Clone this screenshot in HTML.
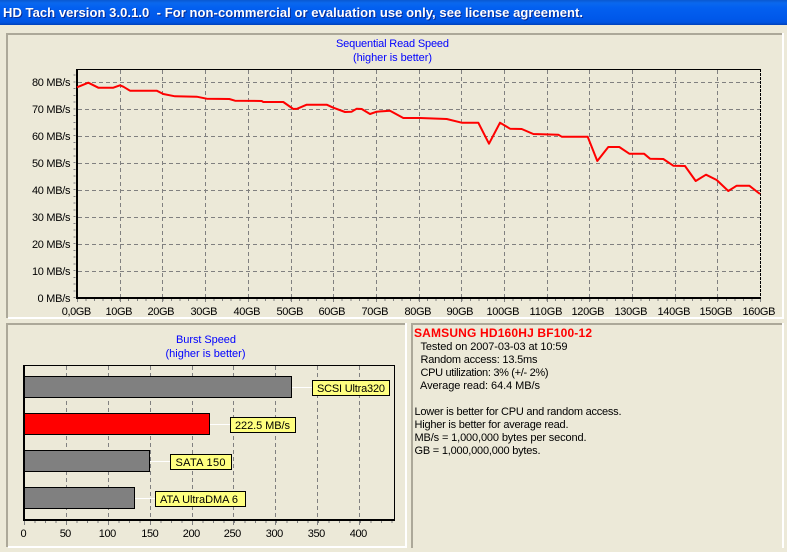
<!DOCTYPE html>
<html><head><meta charset="utf-8"><style>
html,body{margin:0;padding:0;background:#ece9d8;width:787px;height:552px;overflow:hidden}
svg{display:block}
text{font-family:"Liberation Sans",sans-serif;font-size:11px;fill:#000}
.b{fill:#0000ff}
.g{stroke:#808080;stroke-width:1;stroke-dasharray:4 3;fill:none}
.s{stroke:#808080;fill:none}
.lab{fill:#ffff80;stroke:#000;stroke-width:1}
.w{stroke:#fff;stroke-width:1}
</style></head><body>
<svg xmlns="http://www.w3.org/2000/svg" width="787" height="552" viewBox="0 0 787 552">
<defs>
<linearGradient id="t" x1="0" y1="0" x2="0" y2="1">
<stop offset="0" stop-color="#0a58d0"/><stop offset=".12" stop-color="#0a68ee"/><stop offset=".3" stop-color="#0360f0"/><stop offset=".75" stop-color="#0058ea"/><stop offset=".9" stop-color="#0054e0"/><stop offset="1" stop-color="#0040b8"/>
</linearGradient>
</defs>
<rect width="787" height="552" fill="#ece9d8"/>
<rect width="787" height="25" fill="url(#t)"/>
<text x="4" y="18" textLength="580" lengthAdjust="spacing" style="font-size:13px;font-weight:bold;fill:#0a2a90" xml:space="preserve">HD Tach version 3.0.1.0  - For non-commercial or evaluation use only, see license agreement.</text>
<text x="3" y="17" textLength="580" lengthAdjust="spacing" style="font-size:13px;font-weight:bold;fill:#fff" xml:space="preserve">HD Tach version 3.0.1.0  - For non-commercial or evaluation use only, see license agreement.</text>

<g shape-rendering="crispEdges">
<!-- top panel -->
<rect x="6" y="33" width="776" height="2" fill="#aca899"/>
<rect x="6" y="33" width="2" height="285" fill="#aca899"/>
<rect x="8" y="317" width="775" height="2" fill="#fff"/>
<rect x="782" y="33" width="2" height="286" fill="#fff"/>
<!-- lower left panel -->
<rect x="6" y="323" width="400" height="2" fill="#aca899"/>
<rect x="6" y="323" width="2" height="224" fill="#aca899"/>
<rect x="8" y="546" width="398" height="2" fill="#fff"/>
<rect x="405" y="323" width="2" height="225" fill="#fff"/>
<!-- lower right panel -->
<rect x="411" y="323" width="371" height="2" fill="#aca899"/>
<rect x="411" y="323" width="2" height="225" fill="#aca899"/>
<rect x="782" y="323" width="2" height="225" fill="#fff"/>

<!-- top chart grid -->
<path class="g" d="M78 82.5H760M78 109.5H760M78 136.5H760M78 163.5H760M78 190.5H760M78 217.5H760M78 244.5H760M78 271.5H760"/>
<path class="g" d="M120.5 70V297M162.5 70V297M205.5 70V297M248.5 70V297M291.5 70V297M333.5 70V297M376.5 70V297M419.5 70V297M461.5 70V297M504.5 70V297M547.5 70V297M589.5 70V297M632.5 70V297M675.5 70V297M717.5 70V297"/>
<!-- top chart ticks -->
<line x1="74.5" y1="298" x2="74.5" y2="69" stroke="#808080" stroke-width="2" stroke-dasharray="1 5.74"/>
<line x1="77" y1="300" x2="761" y2="300" stroke="#808080" stroke-width="2" stroke-dasharray="1 7.54"/>
<path class="s" d="M77.5 299V302M120.5 299V302M162.5 299V302M205.5 299V302M248.5 299V302M291.5 299V302M333.5 299V302M376.5 299V302M419.5 299V302M461.5 299V302M504.5 299V302M547.5 299V302M589.5 299V302M632.5 299V302M675.5 299V302M717.5 299V302M760.5 299V302"/>
<!-- axes -->
<rect x="76" y="69" width="2" height="230" fill="#000"/>
<rect x="76" y="69" width="685" height="1" fill="#000"/>
<rect x="76" y="297" width="685" height="2" fill="#000"/>
<line x1="760.5" y1="69" x2="760.5" y2="298" stroke="#000" stroke-dasharray="3 1"/>

<!-- burst chart grid -->
<path class="g" d="M66.5 366V519M108.5 366V519M150.5 366V519M192.5 366V519M233.5 366V519M275.5 366V519M317.5 366V519M359.5 366V519"/>
<line x1="24" y1="522" x2="394" y2="522" stroke="#808080" stroke-width="2" stroke-dasharray="1 9.5"/>
<path class="s" d="M24.5 521V525M66.5 521V525M108.5 521V525M150.5 521V525M192.5 521V525M233.5 521V525M275.5 521V525M317.5 521V525M359.5 521V525"/>
<rect x="23" y="365" width="372" height="1" fill="#000"/>
<rect x="23" y="365" width="2" height="156" fill="#000"/>
<rect x="23" y="519" width="372" height="2" fill="#000"/>
<rect x="394" y="365" width="1" height="156" fill="#000"/>

<!-- connectors -->
<path class="w" d="M292 387.5H313M210 424.5H231M150 461.5H171M135 498.5H156"/>

<!-- bars -->
<rect x="24.5" y="376.5" width="267" height="21" fill="#808080" stroke="#000" stroke-width="1"/>
<rect x="24.5" y="413.5" width="185" height="21" fill="#ff0000" stroke="#000" stroke-width="1"/>
<rect x="24.5" y="450.5" width="125" height="21" fill="#808080" stroke="#000" stroke-width="1"/>
<rect x="24.5" y="487.5" width="110" height="21" fill="#808080" stroke="#000" stroke-width="1"/>

<!-- callouts -->
<rect class="lab" x="312.5" y="380.5" width="77" height="15"/>
<rect class="lab" x="230.5" y="417.5" width="65" height="15"/>
<rect class="lab" x="170.5" y="454.5" width="61" height="15"/>
<rect class="lab" x="155.5" y="491.5" width="90" height="15"/>
</g>

<!-- curve -->
<polyline fill="none" stroke="#ff0000" stroke-width="2" stroke-linejoin="round" points="77,87.3 88.3,82.7 98.3,87.7 113.3,87.7 120,85.3 123.3,86.7 130,90.7 156.7,90.7 163.3,94 175,96.3 196.7,96.7 206.7,98.7 229.3,99 235,100.7 261.7,101 263.3,102 283.3,102 293.3,109 297.3,108.7 306.7,104.7 326.7,104.7 333.3,107.7 345,112 351.7,111.7 356.7,108.7 361.7,109 370,114 376.7,111.7 390,110.7 403.3,118 420,118 446.7,119 461.7,122.7 478.3,122.7 489,143.7 500,122.7 510,128.7 521.7,129 533.3,134 558.3,134.7 561.7,136.7 587.7,136.7 597.3,161 608.3,147 619.3,147 629.3,153.7 644,153.7 650,158.7 663.3,159 673.3,165.7 685,166 695.7,181 706,174.7 716.7,180 728.3,191 736.7,185.7 749.3,185.7 760,194"/>

<!-- chart titles -->
<text class="b" x="392.5" y="47" text-anchor="middle" textLength="113">Sequential Read Speed</text>
<text class="b" x="392.5" y="61" text-anchor="middle" textLength="79">(higher is better)</text>
<text class="b" x="206" y="343" text-anchor="middle" textLength="60">Burst Speed</text>
<text class="b" x="205.5" y="357" text-anchor="middle" textLength="80">(higher is better)</text>

<!-- y labels -->
<g text-anchor="end">
<text x="70.5" y="86" textLength="38.5">80 MB/s</text>
<text x="70.5" y="113" textLength="38.5">70 MB/s</text>
<text x="70.5" y="140" textLength="38.5">60 MB/s</text>
<text x="70.5" y="167" textLength="38.5">50 MB/s</text>
<text x="70.5" y="194" textLength="38.5">40 MB/s</text>
<text x="70.5" y="221" textLength="38.5">30 MB/s</text>
<text x="70.5" y="248" textLength="38.5">20 MB/s</text>
<text x="70.5" y="275" textLength="38.5">10 MB/s</text>
<text x="70.5" y="302" textLength="33">0 MB/s</text>
</g>
<!-- x labels -->
<g text-anchor="middle">
<text x="76.5" y="315" textLength="29.5">0,0GB</text>
<text x="119" y="315" textLength="27">10GB</text>
<text x="161" y="315" textLength="27">20GB</text>
<text x="204" y="315" textLength="27">30GB</text>
<text x="247" y="315" textLength="27">40GB</text>
<text x="290" y="315" textLength="27">50GB</text>
<text x="332" y="315" textLength="27">60GB</text>
<text x="375" y="315" textLength="27">70GB</text>
<text x="418" y="315" textLength="27">80GB</text>
<text x="460" y="315" textLength="27">90GB</text>
<text x="503" y="315" textLength="33">100GB</text>
<text x="546" y="315" textLength="33">110GB</text>
<text x="588" y="315" textLength="33">120GB</text>
<text x="631" y="315" textLength="33">130GB</text>
<text x="674" y="315" textLength="33">140GB</text>
<text x="716" y="315" textLength="33">150GB</text>
<text x="759" y="315" textLength="33">160GB</text>
</g>
<!-- burst x labels -->
<g text-anchor="middle">
<text x="23.5" y="537">0</text>
<text x="65.5" y="537" textLength="11.5">50</text>
<text x="107.5" y="537" textLength="17.5">100</text>
<text x="150" y="537" textLength="17.5">150</text>
<text x="191.5" y="537" textLength="17.5">200</text>
<text x="232.5" y="537" textLength="17.5">250</text>
<text x="274.5" y="537" textLength="17.5">300</text>
<text x="316.5" y="537" textLength="17.5">350</text>
<text x="358.5" y="537" textLength="17.5">400</text>
</g>
<!-- callout text -->
<text x="317" y="392" textLength="68">SCSI Ultra320</text>
<text x="235" y="429" textLength="55">222.5 MB/s</text>
<text x="175.5" y="466" textLength="50">SATA 150</text>
<text x="160" y="503" textLength="78">ATA UltraDMA 6</text>

<!-- info text -->
<text x="414" y="337" textLength="178" style="font-weight:bold;font-size:12px;fill:#ff0000">SAMSUNG HD160HJ BF100-12</text>
<text x="420.5" y="350" textLength="147">Tested on 2007-03-03 at 10:59</text>
<text x="420.5" y="363" textLength="117">Random access: 13.5ms</text>
<text x="420.5" y="376" textLength="128">CPU utilization: 3% (+/- 2%)</text>
<text x="420" y="389" textLength="120">Average read: 64.4 MB/s</text>
<text x="414.5" y="415" textLength="207">Lower is better for CPU and random access.</text>
<text x="414.5" y="428" textLength="154">Higher is better for average read.</text>
<text x="414.5" y="441" textLength="172">MB/s = 1,000,000 bytes per second.</text>
<text x="414.5" y="454" textLength="126">GB = 1,000,000,000 bytes.</text>
</svg>
</body></html>
